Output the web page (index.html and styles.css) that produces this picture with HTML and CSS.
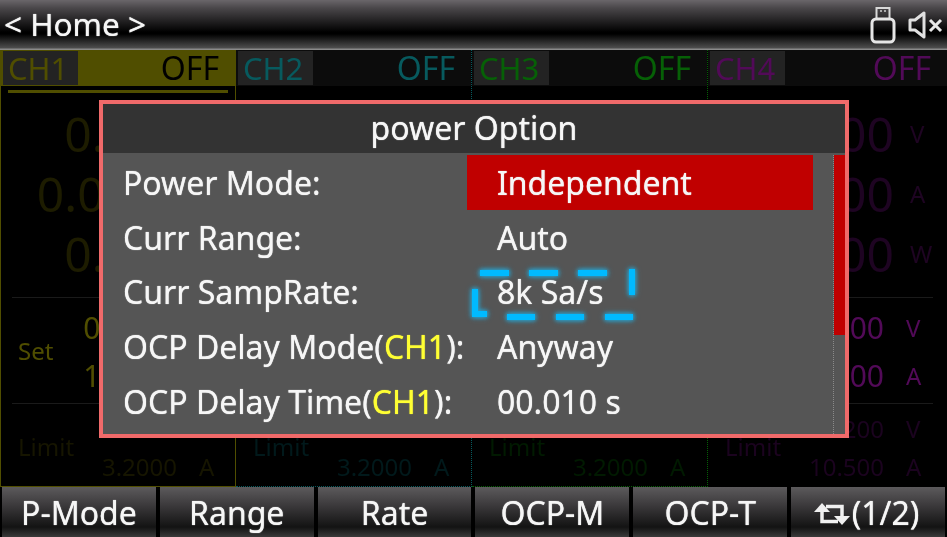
FILE: index.html
```html
<!DOCTYPE html>
<html lang="en">
<head>
    <meta charset="UTF-8">
    <title>power Option</title>
    <link rel="stylesheet" href="styles.css">
</head>
<body>
    <div class="screen">
        <!-- Top bar -->
        <div class="topbar">
            <span class="crumb">&lt; Home &gt;</span>
            <div class="status-icons">
                <svg class="usb-icon" viewBox="0 0 26 38" width="26" height="38">
                    <path d="M6.5 13V2h13v11" fill="none" stroke="#d8d8d8" stroke-width="2"/>
                    <path d="M10 5h2M14 5h2" stroke="#aaa" stroke-width="2"/>
                    <rect x="2" y="13" width="22" height="23" rx="4" fill="none" stroke="#e6e6e6" stroke-width="3"/>
                </svg>
                <svg class="mute-icon" viewBox="0 0 36 28" width="36" height="28">
                    <path d="M2 9h5l9-7v24l-9-7H2z" fill="none" stroke="#e0e0e0" stroke-width="3" stroke-linejoin="round"/>
                    <path d="M22 9l11 11M33 9L22 20" stroke="#e8e8e8" stroke-width="3"/>
                </svg>
            </div>
        </div>

        <!-- Channels behind the dialog -->
        <div class="channels">
            <section class="channel ch1">
                <div class="ch-head"><span class="ch-chip">CH1</span><span class="ch-state">OFF</span></div>
                <div class="ch-rule"></div>
                <div class="readouts">
                    <div class="row big"><span class="val">0.000</span><span class="unit">V</span></div>
                    <div class="row big"><span class="val">0.0000</span><span class="unit">A</span></div>
                    <div class="row big"><span class="val">0.000</span><span class="unit">W</span></div>
                </div>
                <div class="block set">
                    <span class="block-label">Set</span>
                    <div class="row"><span class="val">00.000</span><span class="unit">V</span></div>
                    <div class="row"><span class="val">1.0000</span><span class="unit">A</span></div>
                </div>
                <div class="block limit">
                    <span class="block-label">Limit</span>
                    <div class="row"><span class="val">33.000</span><span class="unit">V</span></div>
                    <div class="row"><span class="val">3.2000</span><span class="unit">A</span></div>
                </div>
            </section>
            <section class="channel ch2">
                <div class="ch-head"><span class="ch-chip">CH2</span><span class="ch-state">OFF</span></div>
                <div class="ch-rule"></div>
                <div class="readouts">
                    <div class="row big"><span class="val">0.000</span><span class="unit">V</span></div>
                    <div class="row big"><span class="val">0.0000</span><span class="unit">A</span></div>
                    <div class="row big"><span class="val">0.000</span><span class="unit">W</span></div>
                </div>
                <div class="block set">
                    <span class="block-label">Set</span>
                    <div class="row"><span class="val">00.000</span><span class="unit">V</span></div>
                    <div class="row"><span class="val">1.0000</span><span class="unit">A</span></div>
                </div>
                <div class="block limit">
                    <span class="block-label">Limit</span>
                    <div class="row"><span class="val">33.000</span><span class="unit">V</span></div>
                    <div class="row"><span class="val">3.2000</span><span class="unit">A</span></div>
                </div>
            </section>
            <section class="channel ch3">
                <div class="ch-head"><span class="ch-chip">CH3</span><span class="ch-state">OFF</span></div>
                <div class="ch-rule"></div>
                <div class="readouts">
                    <div class="row big"><span class="val">0.000</span><span class="unit">V</span></div>
                    <div class="row big"><span class="val">0.0000</span><span class="unit">A</span></div>
                    <div class="row big"><span class="val">0.000</span><span class="unit">W</span></div>
                </div>
                <div class="block set">
                    <span class="block-label">Set</span>
                    <div class="row"><span class="val">00.000</span><span class="unit">V</span></div>
                    <div class="row"><span class="val">1.0000</span><span class="unit">A</span></div>
                </div>
                <div class="block limit">
                    <span class="block-label">Limit</span>
                    <div class="row"><span class="val">33.000</span><span class="unit">V</span></div>
                    <div class="row"><span class="val">3.2000</span><span class="unit">A</span></div>
                </div>
            </section>
            <section class="channel ch4">
                <div class="ch-head"><span class="ch-chip">CH4</span><span class="ch-state">OFF</span></div>
                <div class="ch-rule"></div>
                <div class="readouts">
                    <div class="row big"><span class="val">00.000</span><span class="unit">V</span></div>
                    <div class="row big"><span class="val">0.0000</span><span class="unit">A</span></div>
                    <div class="row big"><span class="val">00.000</span><span class="unit">W</span></div>
                </div>
                <div class="block set">
                    <span class="block-label">Set</span>
                    <div class="row"><span class="val">05.000</span><span class="unit">V</span></div>
                    <div class="row"><span class="val">1.0000</span><span class="unit">A</span></div>
                </div>
                <div class="block limit">
                    <span class="block-label">Limit</span>
                    <div class="row"><span class="val">16.200</span><span class="unit">V</span></div>
                    <div class="row"><span class="val">10.500</span><span class="unit">A</span></div>
                </div>
            </section>
        </div>

        <!-- Softkeys -->
        <div class="softkeys">
            <div class="softkey">P-Mode</div>
            <div class="softkey">Range</div>
            <div class="softkey">Rate</div>
            <div class="softkey">OCP-M</div>
            <div class="softkey">OCP-T</div>
            <div class="softkey softkey-more">
                <svg class="loop-icon" viewBox="0 0 40 26" width="40" height="26">
                    <path d="M2 11l8-9 8 9z" fill="#f0f0f0"/>
                    <path d="M10 9v11.5h16" fill="none" stroke="#f0f0f0" stroke-width="3.5"/>
                    <path d="M38 15l-8 9-8-9z" fill="#f0f0f0"/>
                    <path d="M30 17V5.5H14" fill="none" stroke="#f0f0f0" stroke-width="3.5"/>
                </svg>(1/2)
            </div>
        </div>

        <!-- Option dialog -->
        <div class="dialog">
            <div class="dialog-title">power Option</div>
            <div class="dialog-body">
                <div class="options">
                    <div class="option selected"><span class="opt-name">Power Mode:</span><span class="opt-value">Independent</span></div>
                    <div class="option"><span class="opt-name">Curr Range:</span><span class="opt-value">Auto</span></div>
                    <div class="option"><span class="opt-name">Curr SampRate:</span><span class="opt-value">8k Sa/s</span></div>
                    <div class="option"><span class="opt-name">OCP Delay Mode(<b>CH1</b>):</span><span class="opt-value">Anyway</span></div>
                    <div class="option"><span class="opt-name">OCP Delay Time(<b>CH1</b>):</span><span class="opt-value">00.010 s</span></div>
                </div>
                <div class="scrollbar"><div class="scroll-thumb"></div></div>
            </div>
        </div>

        <!-- Blue dashed callout drawn over the Curr SampRate value -->
        <svg class="callout" viewBox="0 0 170 60" width="170" height="60">
            <path d="M11 9h29M60 9h29M109 9h29M163 5v26M6 25v25h12M38 53h28M87 53h28M136 53h28"/>
        </svg>
    </div>
</body>
</html>
```

FILE: styles.css
```css
* {
    box-sizing: border-box;
}

body {
    margin: 0;
    background: #000;
    font-family: "Noto Sans", "Open Sans", sans-serif;
}

.screen {
    position: relative;
    width: 947px;
    height: 537px;
    display: flex;
    flex-direction: column;
    overflow: hidden;
    background: #000;
    filter: blur(0.5px);
}

/* top bar */
.topbar {
    height: 50px;
    display: flex;
    justify-content: space-between;
    align-items: center;
    padding: 0 3px 2px 4px;
    background: linear-gradient(#6a666a 0, #4a474a 8px, #000 32px, #000 34px, #4e4e4e 48px, #8a8a8a 49px);
    color: #f6f6f6;
    text-shadow: 0 0 1px #f6f6f6;
}

.crumb {
    font-size: 31.5px;
    line-height: 46px;
}

.status-icons {
    display: flex;
    align-items: center;
    gap: 12px;
}

.usb-icon {
    margin-top: 2px;
}

.mute-icon {
    margin-top: 2px;
}

/* channels */
.channels {
    flex: 1;
    display: grid;
    grid-template-columns: 236px 236px 236px 239px;
    min-height: 0;
}

.channel {
    display: flex;
    flex-direction: column;
    border-right: 1px dotted var(--ch);
    border-bottom: 1px dotted var(--ch);
    color: var(--ch);
}

.ch1 {
    --ch: #504e00;
    --dim: #1d1c00;
    --faint: #161500;
    border: 1px solid var(--ch);
    border-top: 0;
}

.ch2 {
    --ch: #075a5e;
    --dim: #021c1e;
    --faint: #01191b;
}

.ch3 {
    --ch: #066006;
    --dim: #021d02;
    --faint: #011a01;
}

.ch4 {
    --ch: #520a58;
    --dim: #1e0422;
    --faint: #1b031f;
    border-right: 0;
    border-bottom: 0;
}

.ch-head {
    height: 36px;
    display: flex;
    justify-content: space-between;
    align-items: center;
    padding-right: 16px;
    font-size: 32px;
    background: #0c0c0c;
}

.ch1 .ch-head {
    background: var(--ch);
    color: #000;
}

.ch-state {
    line-height: 36px;
}

.ch-chip {
    width: 75px;
    height: 34px;
    margin-left: 2px;
    padding-left: 5px;
    font-size: 31px;
    line-height: 34px;
    background: #232323;
    color: var(--ch);
}

.ch-rule {
    height: 3px;
    margin: 4px 7px 0;
}

.ch1 .ch-rule {
    background: var(--ch);
}

.readouts {
    height: 194px;
    margin-top: 10px;
}

.row {
    display: flex;
    align-items: center;
    height: 38px;
    font-size: 24px;
}

.val {
    flex: none;
    width: 176px;
    text-align: right;
    white-space: nowrap;
}

.unit {
    margin-left: 22px;
}

.big {
    height: 60px;
    color: var(--dim);
}

.big .val {
    width: 186px;
    font-size: 48px;
}

.big .unit {
    margin-left: 16px;
    font-size: 24px;
}

.block {
    position: relative;
    border-top: 1px solid #1a1a1a;
    margin-left: 11px;
    margin-right: 14px;
}

.block .row {
    margin-left: -11px;
}

.block-label {
    position: absolute;
    left: 6px;
    font-size: 24px;
}

.set {
    height: 106px;
    padding-top: 5px;
}

.set .row {
    height: 48px;
}

.set .val {
    font-size: 30px;
}

.set .block-label {
    top: 36px;
}

.limit {
    flex: 1;
    padding-top: 5px;
    color: var(--faint);
}

.limit .block-label {
    top: 26px;
}

/* softkeys */
.softkeys {
    height: 50px;
    display: grid;
    grid-template-columns: repeat(6, 1fr);
    gap: 4px;
    padding: 0 2px;
}

.softkey {
    display: flex;
    justify-content: center;
    align-items: center;
    font-size: 32px;
    color: #f6f6f6;
    text-shadow: 0 0 1px #f6f6f6;
    background: linear-gradient(#5c5a5c 0, #3c3a3c 18px, #131313 40px, #3a3a3a 50px);
}

.softkey-more {
    padding-right: 5px;
}

.loop-icon {
    margin-top: 3px;
}

/* dialog */
.dialog {
    position: absolute;
    left: 99px;
    top: 100px;
    width: 750px;
    height: 338px;
    display: flex;
    flex-direction: column;
    border: 4px solid #f06a6a;
    background: #555;
}

.dialog-title {
    height: 49px;
    text-align: center;
    font-size: 32px;
    line-height: 47px;
    color: #f6f6f6;
    text-shadow: 0 0 1px #f6f6f6;
    background: #333;
}

.dialog-body {
    flex: 1;
    display: flex;
    min-height: 0;
    padding-top: 2px;
}

.options {
    flex: 1;
}

.option {
    height: 54.8px;
    display: flex;
    align-items: center;
    padding-left: 20px;
    font-size: 32px;
    color: #f6f6f6;
    text-shadow: 0 0 1px #f6f6f6;
    white-space: nowrap;
}

.opt-name {
    width: 344px;
    flex: none;
}

.opt-name b {
    color: #ffff33;
    font-weight: 400;
    text-shadow: 0 0 1px #ffff33;
}

.opt-value {
    height: 100%;
    width: 346px;
    padding-left: 30px;
    display: flex;
    align-items: center;
}

.selected .opt-value {
    background: #c00000;
}

.scrollbar {
    width: 12px;
    border-left: 1px dotted #8a8a8a;
}

.scroll-thumb {
    height: 180px;
    background: #c00000;
}

/* callout */
.callout {
    position: absolute;
    left: 469px;
    top: 264px;
    filter: drop-shadow(0 0 2px #2b9cc5) drop-shadow(0 0 2px #2b9cc5);
}

.callout path {
    fill: none;
    stroke: #00baff;
    stroke-width: 6;
}
```
